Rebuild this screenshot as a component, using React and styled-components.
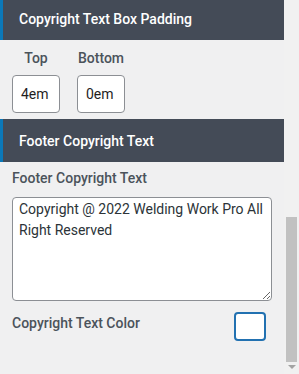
import React from "react";
import styled, { createGlobalStyle } from "styled-components";

const Global = createGlobalStyle`
  html, body { margin: 0; padding: 0; background: #f0f0f1; }
  body { font-family: Roboto, "Noto Sans", "Liberation Sans", sans-serif; }
  * { box-sizing: border-box; }
`;

const Frame = styled.div`
  display: flex;
  width: 299px;
  height: 374px;
  overflow: hidden;
  background: #f0f0f1;
`;

const Main = styled.div`
  flex: 1;
  display: flex;
  flex-direction: column;
  margin-top: -3px;
  min-width: 0;
`;

const Header = styled.div`
  height: 43px;
  flex: none;
  display: flex;
  align-items: center;
  background: #444b57;
  border-left: 3px solid #0b78b8;
  padding-left: 16px;
  color: #ffffff;
  font-size: 14px;
  font-weight: 500;
`;

const PaddingSection = styled.div`
  padding: 10px 12px 6px;
  display: flex;
  gap: 17px;
`;

const Field = styled.div`
  display: flex;
  flex-direction: column;
  align-items: center;
  gap: 8px;
  width: 48px;
`;

const Label = styled.div`
  font-size: 14px;
  line-height: 17px;
  font-weight: 500;
  color: #4b535b;
  white-space: nowrap;
  margin-top: ${(p) => p.$offset || 0}px;
`;

const SmallInput = styled.div`
  width: 48px;
  height: 38px;
  background: #fff;
  border: 1px solid #8c8f94;
  border-radius: 4px;
  padding: 0 8px;
  display: flex;
  align-items: center;
  font-size: 14px;
  color: #1e1e1e;
`;

const TextSection = styled.div`
  padding: 8px 12px 0;
  display: flex;
  flex-direction: column;
`;

const TextArea = styled.textarea`
  margin-top: 10px;
  width: 260px;
  height: 104px;
  background: #fff;
  border: 1px solid #8c8f94;
  border-radius: 4px;
  padding: 1px 6px;
  font-family: Roboto, "Noto Sans", "Liberation Sans", sans-serif;
  font-size: 14px;
  line-height: 20.5px;
  color: #2c3338;
  outline: none;
`;

const ColorRow = styled.div`
  margin-top: 11px;
  display: flex;
  justify-content: space-between;
  align-items: flex-start;
  padding-right: 6px;
`;

const Swatch = styled.div`
  width: 32px;
  height: 29px;
  background: #fff;
  border: 2px solid #2271b1;
  border-radius: 4px;
`;

const ScrollBar = styled.div`
  width: 15px;
  flex: none;
  display: flex;
  flex-direction: column;
  align-items: center;
  padding: 217px 0 0 0;
  background: #f1f1f1;
`;

const Thumb = styled.div`
  width: 11px;
  height: 145px;
  background: #c1c1c1;
`;

const Arrow = styled.div`
  margin-top: 3px;
  width: 0;
  height: 0;
  border-left: 4px solid transparent;
  border-right: 4px solid transparent;
  border-top: 4px solid #a3a3a3;
`;

export default function App() {
  return (
    <>
      <Global />
      <Frame>
        <Main>
          <Header>Copyright Text Box Padding</Header>
          <PaddingSection>
            <Field>
              <Label>Top</Label>
              <SmallInput>4em</SmallInput>
            </Field>
            <Field>
              <Label>Bottom</Label>
              <SmallInput>0em</SmallInput>
            </Field>
          </PaddingSection>
          <Header>Footer Copyright Text</Header>
          <TextSection>
            <Label>Footer Copyright Text</Label>
            <TextArea defaultValue="Copyright @ 2022 Welding Work Pro All Right Reserved" />
            <ColorRow>
              <Label $offset={3}>Copyright Text Color</Label>
              <Swatch />
            </ColorRow>
          </TextSection>
        </Main>
        <ScrollBar>
          <Thumb />
          <Arrow />
        </ScrollBar>
      </Frame>
    </>
  );
}
